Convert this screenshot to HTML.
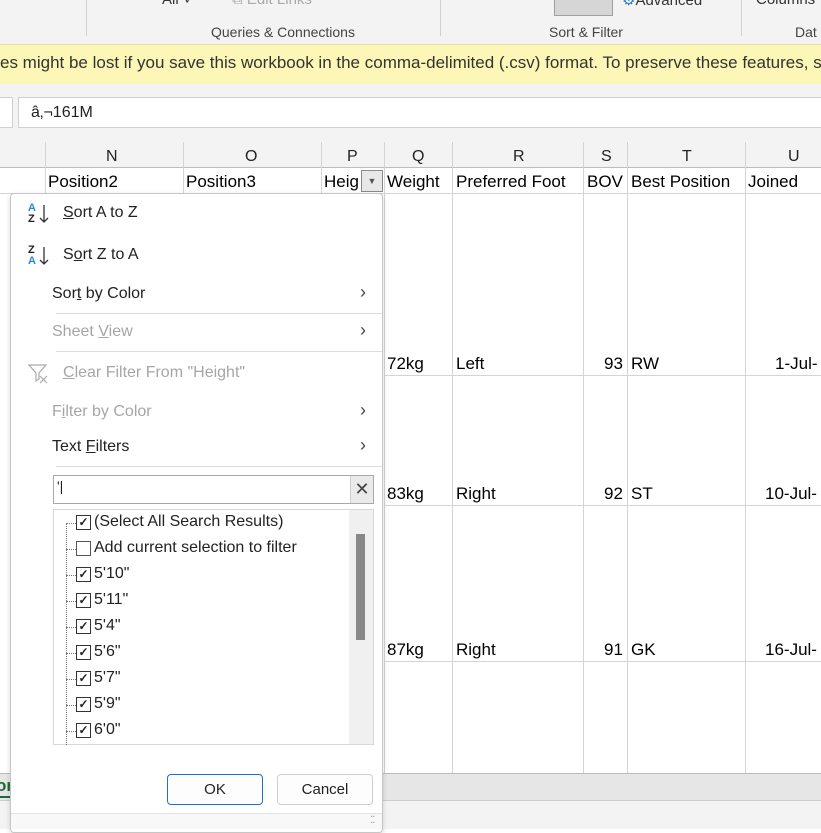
<!DOCTYPE html>
<html><head><meta charset="utf-8"><style>
*{margin:0;padding:0;box-sizing:border-box}
body{width:821px;height:829px;overflow:hidden;position:relative;background:#fff;font-family:"Liberation Sans",sans-serif;color:#222}
.a{position:absolute;white-space:nowrap}
.ui{font-size:15px}
.cell{font-size:17px;color:#000}
.vl{position:absolute;width:1px;background:#d4d4d4}
.hl{position:absolute;height:1px;background:#d4d4d4}
.mi{position:absolute;left:52px;font-size:16px;color:#222}
.dis{color:#a6a6a6}
.arr{position:absolute;left:360px;font-size:18px;color:#444}
.sep{position:absolute;left:56px;width:326px;height:1px;background:#dcdcdc}
.cb{position:absolute;left:76px;width:15px;height:15px;border:1px solid #333;background:#fff;font-size:12px;line-height:13px;text-align:center;font-weight:bold}
.it{position:absolute;left:94px;font-size:16px;color:#222}
.dot{position:absolute;left:66px;width:10px;border-top:1px dotted #777}
</style></head><body>
<div class="a" style="left:0;top:0;width:821px;height:44px;background:#f3f3f3"></div>
<div class="vl" style="left:86px;top:0;height:36px;background:#d0d0d0"></div>
<div class="vl" style="left:440px;top:0;height:36px;background:#d0d0d0"></div>
<div class="vl" style="left:741px;top:0;height:36px;background:#d0d0d0"></div>
<div class="a ui" style="left:162px;top:-9px;color:#333">All ˅</div>
<div class="a ui" style="left:232px;top:-9px;color:#aaa">⧉ Edit Links</div>
<div class="a" style="left:554px;top:0;width:59px;height:16px;background:#d6d6d6;border:1px solid #a0a0a0;border-top:none"></div>
<div class="a ui" style="left:622px;top:-9px;color:#333"><span style="color:#2b7cd3">⚙</span>Advanced</div>
<div class="a ui" style="left:756px;top:-9px;color:#333">Columns</div>
<div class="a" style="left:211px;top:24px;font-size:14px;color:#444">Queries &amp; Connections</div>
<div class="a" style="left:549px;top:24px;font-size:14px;color:#444">Sort &amp; Filter</div>
<div class="a" style="left:795px;top:24px;font-size:14px;color:#444">Dat</div>
<div class="a" style="left:0;top:44px;width:821px;height:40px;background:#fcf7b6;border-top:1px solid #e8e0a0;box-shadow:0 3px 4px rgba(0,0,0,.12)"></div>
<div class="a" style="left:0;top:53px;font-size:17px;color:#333">es might be lost if you save this workbook in the comma-delimited (.csv) format. To preserve these features, s</div>
<div class="a" style="left:0;top:84px;width:821px;height:56px;background:#f3f3f3"></div>
<div class="a" style="left:-5px;top:97px;width:18px;height:31px;background:#fff;border:1px solid #d0d0d0"></div>
<div class="a" style="left:18px;top:97px;width:810px;height:31px;background:#fff;border:1px solid #d0d0d0"></div>
<div class="a" style="left:31px;top:104px;font-size:16px;color:#222">â‚¬161M</div>
<div class="a" style="left:0;top:140px;width:821px;height:28px;background:#f3f3f3;border-bottom:1px solid #bdbdbd"></div>
<div class="a ui" style="left:106px;top:148px;font-size:16px">N</div>
<div class="a ui" style="left:245px;top:148px;font-size:16px">O</div>
<div class="a ui" style="left:347px;top:148px;font-size:16px">P</div>
<div class="a ui" style="left:412px;top:148px;font-size:16px">Q</div>
<div class="a ui" style="left:513px;top:148px;font-size:16px">R</div>
<div class="a ui" style="left:601px;top:148px;font-size:16px">S</div>
<div class="a ui" style="left:682px;top:148px;font-size:16px">T</div>
<div class="a ui" style="left:788px;top:148px;font-size:16px">U</div>
<div class="vl" style="left:45px;top:142px;height:51px"></div>
<div class="vl" style="left:183px;top:142px;height:51px"></div>
<div class="vl" style="left:321px;top:142px;height:51px"></div>
<div class="vl" style="left:384px;top:142px;height:631px"></div>
<div class="vl" style="left:452px;top:142px;height:631px"></div>
<div class="vl" style="left:583px;top:142px;height:631px"></div>
<div class="vl" style="left:627px;top:142px;height:631px"></div>
<div class="vl" style="left:745px;top:142px;height:631px"></div>
<div class="hl" style="left:0;top:193px;width:821px"></div>
<div class="hl" style="left:384px;top:375px;width:437px"></div>
<div class="hl" style="left:384px;top:505px;width:437px"></div>
<div class="hl" style="left:384px;top:661px;width:437px"></div>
<div class="a cell" style="left:48px;top:172px">Position2</div>
<div class="a cell" style="left:186px;top:172px">Position3</div>
<div class="a cell" style="left:324px;top:172px">Heig</div>
<div class="a" style="left:361px;top:170px;width:22px;height:22px;background:#e8e8e8;border:1px solid #8a8a8a;font-size:9px;text-align:center;line-height:20px;color:#555">▼</div>
<div class="a cell" style="left:387px;top:172px">Weight</div>
<div class="a cell" style="left:456px;top:172px">Preferred Foot</div>
<div class="a cell" style="left:587px;top:172px">BOV</div>
<div class="a cell" style="left:631px;top:172px">Best Position</div>
<div class="a cell" style="left:748px;top:172px">Joined</div>
<div class="a cell" style="left:387px;top:354px">72kg</div><div class="a cell" style="left:456px;top:354px">Left</div><div class="a cell" style="left:604px;top:354px">93</div><div class="a cell" style="left:631px;top:354px">RW</div><div class="a cell" style="left:775px;top:354px">1-Jul-</div>
<div class="a cell" style="left:387px;top:484px">83kg</div><div class="a cell" style="left:456px;top:484px">Right</div><div class="a cell" style="left:604px;top:484px">92</div><div class="a cell" style="left:631px;top:484px">ST</div><div class="a cell" style="left:765px;top:484px">10-Jul-</div>
<div class="a cell" style="left:387px;top:640px">87kg</div><div class="a cell" style="left:456px;top:640px">Right</div><div class="a cell" style="left:604px;top:640px">91</div><div class="a cell" style="left:631px;top:640px">GK</div><div class="a cell" style="left:765px;top:640px">16-Jul-</div>
<div class="a" style="left:0;top:773px;width:821px;height:27px;background:#e6e6e6;border-top:1px solid #bbb"></div>
<div class="a" style="left:0;top:800px;width:821px;height:29px;background:#f3f3f3;border-top:1px solid #ccc"></div>
<div class="a" style="left:-4px;top:776px;font-size:17px;font-weight:bold;color:#1e6b3a">or</div>
<div class="a" style="left:0;top:796px;width:10px;height:2px;background:#1e6b3a"></div>
<div class="a" style="left:10px;top:193px;width:373px;height:640px;background:#fff;border:1px solid #c6c6c6;border-radius:4px;box-shadow:0 2px 6px rgba(0,0,0,.15)"></div>
<div class="a" style="left:11px;top:813px;width:371px;height:16px;background:#f8f8f8;border-top:1px solid #dde4ea"></div>
<div class="a" style="left:370px;top:815px;font-size:10px;color:#999;letter-spacing:-1px">⁚⁚</div>
<div class="a" style="left:28px;top:203px;font-size:11px;line-height:11px;font-weight:bold"><span style="color:#2b88d8">A</span><br>Z</div>
<svg class="a" style="left:39px;top:204px" width="10" height="20"><path d="M5 1v17M1 14l4 4 4-4" fill="none" stroke="#333" stroke-width="1.3"/></svg>
<div class="mi" style="left:63px;top:204px"><u>S</u>ort A to Z</div>
<div class="a" style="left:28px;top:245px;font-size:11px;line-height:11px;font-weight:bold">Z<br><span style="color:#2b88d8">A</span></div>
<svg class="a" style="left:39px;top:246px" width="10" height="20"><path d="M5 1v17M1 14l4 4 4-4" fill="none" stroke="#333" stroke-width="1.3"/></svg>
<div class="mi" style="left:63px;top:246px">S<u>o</u>rt Z to A</div>
<div class="mi" style="top:285px">Sor<u>t</u> by Color</div><div class="arr" style="top:282px">›</div>
<div class="sep" style="top:313px"></div>
<div class="mi dis" style="top:323px">Sheet <u>V</u>iew</div><div class="arr dis" style="top:320px">›</div>
<div class="sep" style="top:351px"></div>
<svg class="a" style="left:28px;top:363px" width="22" height="22" viewBox="0 0 22 22"><path d="M1 2h17l-7 8v6l-3 2v-8z" fill="none" stroke="#aaa" stroke-width="1.2"/><path d="M12 13l7 7M19 13l-7 7" stroke="#aaa" stroke-width="1.2"/></svg>
<div class="mi dis" style="left:63px;top:364px"><u>C</u>lear Filter From "Height"</div>
<div class="mi dis" style="top:403px">F<u>i</u>lter by Color</div><div class="arr dis" style="top:400px">›</div>
<div class="mi" style="top:438px">Text <u>F</u>ilters</div><div class="arr" style="top:435px">›</div>
<div class="sep" style="top:466px"></div>
<div class="a" style="left:53px;top:475px;width:321px;height:29px;border:1px solid #a8a8a8;background:#fff"></div>
<div class="a" style="left:350px;top:476px;width:23px;height:27px;background:#eaeaea;border-left:1px solid #ccc;text-align:center;font-size:18px;line-height:26px;color:#444">✕</div>
<div class="a" style="left:57px;top:478px;font-size:14px">'|</div>
<div class="a" style="left:53px;top:509px;width:321px;height:236px;border:1px solid #d8d8d8;background:#fff"></div>
<div class="a" style="left:349px;top:510px;width:24px;height:234px;background:#f0f0f0"></div>
<div class="a" style="left:356px;top:534px;width:9px;height:106px;background:#888"></div>
<div class="a" style="left:66px;top:523px;width:0;height:222px;border-left:1px dotted #777"></div>
<div class="dot" style="top:523px"></div><div class="cb" style="top:515px">✓</div><div class="it" style="top:513px">(Select All Search Results)</div>
<div class="dot" style="top:549px"></div><div class="cb" style="top:541px;border-color:#555"></div><div class="it" style="top:539px">Add current selection to filter</div>
<div class="dot" style="top:575px"></div><div class="cb" style="top:567px">✓</div><div class="it" style="top:565px">5'10"</div>
<div class="dot" style="top:601px"></div><div class="cb" style="top:593px">✓</div><div class="it" style="top:591px">5'11"</div>
<div class="dot" style="top:627px"></div><div class="cb" style="top:619px">✓</div><div class="it" style="top:617px">5'4"</div>
<div class="dot" style="top:653px"></div><div class="cb" style="top:645px">✓</div><div class="it" style="top:643px">5'6"</div>
<div class="dot" style="top:679px"></div><div class="cb" style="top:671px">✓</div><div class="it" style="top:669px">5'7"</div>
<div class="dot" style="top:705px"></div><div class="cb" style="top:697px">✓</div><div class="it" style="top:695px">5'9"</div>
<div class="dot" style="top:731px"></div><div class="cb" style="top:723px">✓</div><div class="it" style="top:721px">6'0"</div>
<div class="a" style="left:167px;top:774px;width:96px;height:31px;border:1px solid #1a73c8;border-radius:4px;background:#fdfdfd;text-align:center;line-height:29px;font-size:15px">OK</div>
<div class="a" style="left:277px;top:774px;width:96px;height:31px;border:1px solid #cfcfcf;border-radius:4px;background:#fdfdfd;text-align:center;line-height:29px;font-size:15px">Cancel</div>
</body></html>
